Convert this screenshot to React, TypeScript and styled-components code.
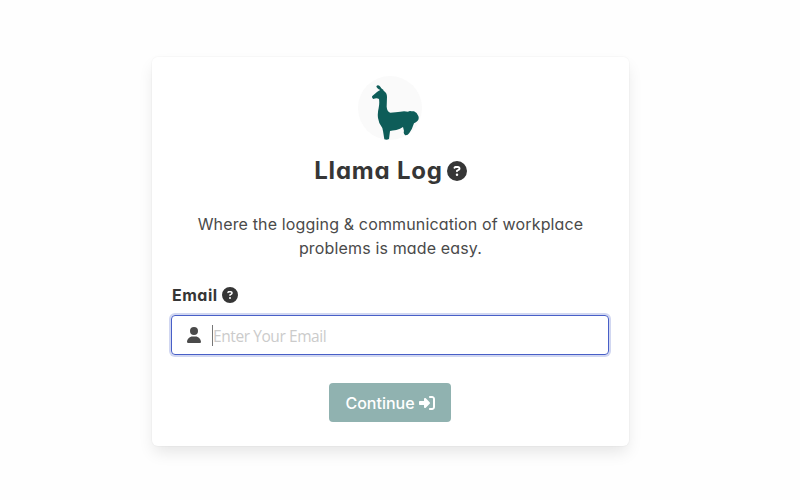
import React from "react";
import styled, { createGlobalStyle } from "styled-components";
import { FaCircleQuestion, FaRightToBracket, FaUser } from "react-icons/fa6";

const GlobalStyle = createGlobalStyle`
  * { box-sizing: border-box; }
  body {
    margin: 0;
    background: #fefefe;
    color: #4a4a4a;
    font-family: Inter, "Open Sans", sans-serif;
    font-feature-settings: "cv11";
    font-size: 16px;
  }
`;

const Page = styled.main`
  height: 500px;
  padding: 57px 0 0 152px;
  overflow: hidden;
`;

const Card = styled.section`
  width: 477px;
  height: 389px;
  padding: 19px 20px 0 19px;
  display: flex;
  flex-direction: column;
  align-items: center;
  background: #fff;
  border-radius: 6px;
  box-shadow: 0 8px 16px -2px rgba(10, 10, 10, 0.1), 0 0 0 1px rgba(10, 10, 10, 0.02);
`;

const Logo = styled.svg`
  display: block;
  width: 64px;
  height: 64px;
  flex: none;
`;

const Title = styled.h1`
  display: flex;
  align-items: center;
  gap: 4px;
  height: 28px;
  margin: 16px 0 0 1px;
  color: #363636;
  font-size: 24px;
  font-weight: 700;
  letter-spacing: 0.8px;
  white-space: nowrap;

  svg { width: 20px; height: 20px; margin-top: 1px; }
`;

const Intro = styled.p`
  margin: 28px 0 0 1px;
  font-size: 16px;
  line-height: 24px;
  letter-spacing: 0.15px;
  text-align: center;
  white-space: nowrap;
`;

const Label = styled.label`
  display: flex;
  align-items: center;
  align-self: stretch;
  gap: 4px;
  height: 24px;
  margin-top: 23px;
  padding-left: 1px;
  color: #363636;
  font-size: 16px;
  font-weight: 700;
  letter-spacing: 0.5px;
`;

const Field = styled.div`
  display: flex;
  align-items: center;
  align-self: stretch;
  flex: none;
  height: 40px;
  margin-top: 8px;
  padding-left: 14px;
  border: 1px solid #485fc7;
  border-radius: 4px;
  box-shadow: 0 0 0 2px rgba(72, 95, 199, 0.25);

  svg { width: 16px; height: 16px; }
`;

const Caret = styled.span`
  width: 1px;
  height: 21px;
  margin-left: 10px;
  background: #777;
`;

const Placeholder = styled.span`
  padding-top: 2px;
  color: #cbcbcb;
  font-family: "Open Sans", sans-serif;
  font-size: 15.5px;
  letter-spacing: -0.42px;
`;

const Button = styled.button`
  display: flex;
  align-items: center;
  justify-content: center;
  gap: 4px;
  width: 122px;
  height: 39px;
  margin-top: 28px;
  padding: 0;
  border: 0;
  border-radius: 4px;
  background: #90b2b0;
  color: #fff;
  font: 500 16px Inter, sans-serif;
  font-feature-settings: "cv11";
`;

export default function App() {
  return (
    <>
      <GlobalStyle />
      <Page>
        <Card>
          <Logo viewBox="24 19 192 192" aria-label="Llama">
            <circle cx="120" cy="115" r="96" fill="#fafafa" />
            <path
              fill="#0e5d59"
              d="M79 50 Q83 44 89 49 L96 58 Q100 59 101 63 Q111 69 111 82 L110 111 Q111 126 121 129 Q138 128 151 126 Q162 123 174 126 Q179 122 185 125 L192 125 Q201 128 205 139 Q208 147 203 153 Q198 158 192 161 Q187 178 178 190 Q173 198 166 197 Q159 192 162 184 L159 172 Q151 178 139 181 Q127 183 120 184 L117 208 Q110 212 103 209 L99 184 L97 175 Q86 162 84 145 Q82 131 86 115 Q89 101 87 88 Q80 84 70 88 Q64 84 67 79 Q73 74 81 67 Q87 62 91 61 Q80 57 79 50Z"
            />
          </Logo>
          <Title>Llama Log<FaCircleQuestion /></Title>
          <Intro>Where the logging &amp; communication of workplace<br />problems is made easy.</Intro>
          <Label>Email<FaCircleQuestion /></Label>
          <Field>
            <FaUser />
            <Caret />
            <Placeholder>Enter Your Email</Placeholder>
          </Field>
          <Button>Continue<FaRightToBracket /></Button>
        </Card>
      </Page>
    </>
  );
}
